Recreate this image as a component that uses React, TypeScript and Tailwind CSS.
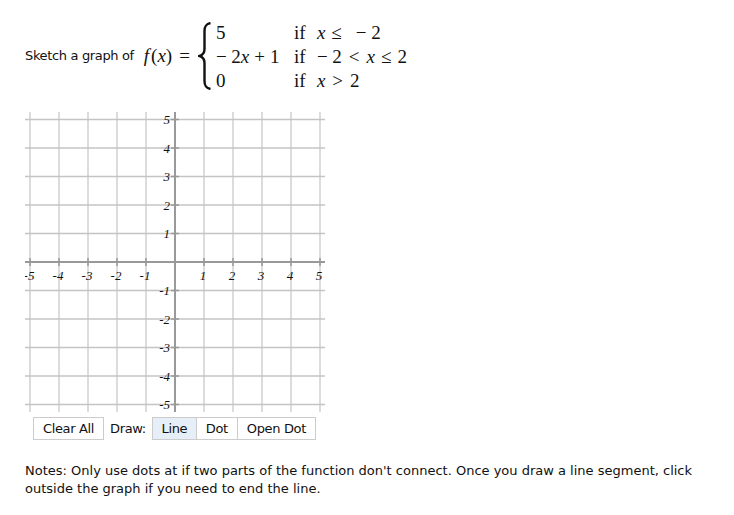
import React from "react";

const UX = 29;
const UY = 28.5;
const C = 150;

function Graph() {
  const ticks = [-5, -4, -3, -2, -1, 1, 2, 3, 4, 5];
  const all = [-5, -4, -3, -2, -1, 0, 1, 2, 3, 4, 5];
  return (
    <svg width={300} height={300} viewBox="0 0 300 300" className="block">
      {all.map((v) => (
        <line key={"v" + v} x1={C + v * UX} x2={C + v * UX} y1={0} y2={300} stroke="#dcdcdc" strokeWidth={2} />
      ))}
      {all.map((v) => (
        <line key={"h" + v} x1={0} x2={300} y1={C - v * UY} y2={C - v * UY} stroke="#c4c4c4" strokeWidth={1.5} />
      ))}
      <line x1={C} x2={C} y1={0} y2={300} stroke="#999" strokeWidth={2} />
      <line x1={0} x2={300} y1={C} y2={C} stroke="#999" strokeWidth={2} />
      {ticks.map((v) => (
        <line key={"tx" + v} x1={C + v * UX} x2={C + v * UX} y1={C - 4} y2={C + 4} stroke="#999" strokeWidth={1.5} />
      ))}
      {ticks.map((v) => (
        <line key={"ty" + v} x1={C - 4} x2={C + 4} y1={C - v * UY} y2={C - v * UY} stroke="#999" strokeWidth={1.5} />
      ))}
      {ticks.map((v) => (
        <text
          key={"lx" + v}
          x={C + v * UX - 1}
          y={C + 18}
          textAnchor="middle"
          fontFamily="'Liberation Serif', serif"
          fontStyle="italic"
          fontSize={13}
          fill="#111"
        >
          {v}
        </text>
      ))}
      {ticks.map((v) => (
        <text
          key={"ly" + v}
          x={C - 5}
          y={C - v * UY + 4.5}
          textAnchor="end"
          fontFamily="'Liberation Serif', serif"
          fontStyle="italic"
          fontSize={13}
          fill="#111"
        >
          {v}
        </text>
      ))}
    </svg>
  );
}

function Brace() {
  return (
    <svg width={14} height={68} viewBox="0 0 14 68" className="block">
      <path
        d="M12.5 1 C8 2 6.5 4 6.5 9 L6.5 27 C6.5 31 5 33 1.5 34 C5 35 6.5 37 6.5 41 L6.5 59 C6.5 64 8 66 12.5 67"
        fill="none"
        stroke="#111"
        strokeWidth={2.4}
      />
    </svg>
  );
}

const serif = "font-['Liberation_Serif',serif]";

export default function App() {
  return (
    <div className="min-h-[515px] w-[734px] bg-white text-[#111] font-['DejaVu_Sans',sans-serif]">
      <div className="pl-[25px] pt-[20px]">
        <div className="flex items-center h-[72px]">
          <span className="text-[13px] tracking-[-0.35px] mr-[10px]">Sketch a graph of</span>
          <span className={`${serif} text-[19px] flex items-center`}>
            <i>f</i>
            <span className="ml-[2px]">(</span>
            <i>x</i>
            <span>)</span>
            <span className="ml-[7px] mr-[8px]">=</span>
          </span>
          <Brace />
          <div className={`${serif} text-[19px] ml-[4px] grid grid-cols-[78px_23px_auto] auto-rows-[24px] items-center leading-none`}>
            <span>5</span>
            <span>if</span>
            <span>
              <i>x</i>
              <span className="mx-[6px]">≤</span>
              <span className="ml-[8px]">−&nbsp;2</span>
            </span>
            <span>
              −&nbsp;2<i>x</i>
              <span className="mx-[5px]">+</span>1
            </span>
            <span>if</span>
            <span>
              −&nbsp;2<span className="mx-[7px]">&lt;</span>
              <i>x</i>
              <span className="mx-[6px]">≤</span>2
            </span>
            <span>0</span>
            <span>if</span>
            <span>
              <i>x</i>
              <span className="mx-[7px]">&gt;</span>2
            </span>
          </div>
        </div>
        <div className="mt-[20px]">
          <Graph />
        </div>
        <div className="mt-[5px] ml-[8px] flex items-center text-[13px] tracking-[-0.35px] h-[23px]">
          <button className="h-[23px] w-[71px] border border-[#ccc] bg-white">Clear All</button>
          <span className="ml-[6px] mr-[6px]">Draw:</span>
          <button className="h-[23px] w-[45px] border border-[#ccc] bg-[#e6eef7]">Line</button>
          <button className="h-[23px] w-[41px] border border-l-0 border-[#ccc] bg-white">Dot</button>
          <button className="h-[23px] w-[78px] border border-l-0 border-[#ccc] bg-white">Open Dot</button>
        </div>
        <p className="mt-[22px] text-[13px] leading-[18px] tracking-[0px] w-[680px]">
          Notes: Only use dots at if two parts of the function don't connect. Once you draw a line segment, click outside the graph if you need to end the line.
        </p>
      </div>
    </div>
  );
}
